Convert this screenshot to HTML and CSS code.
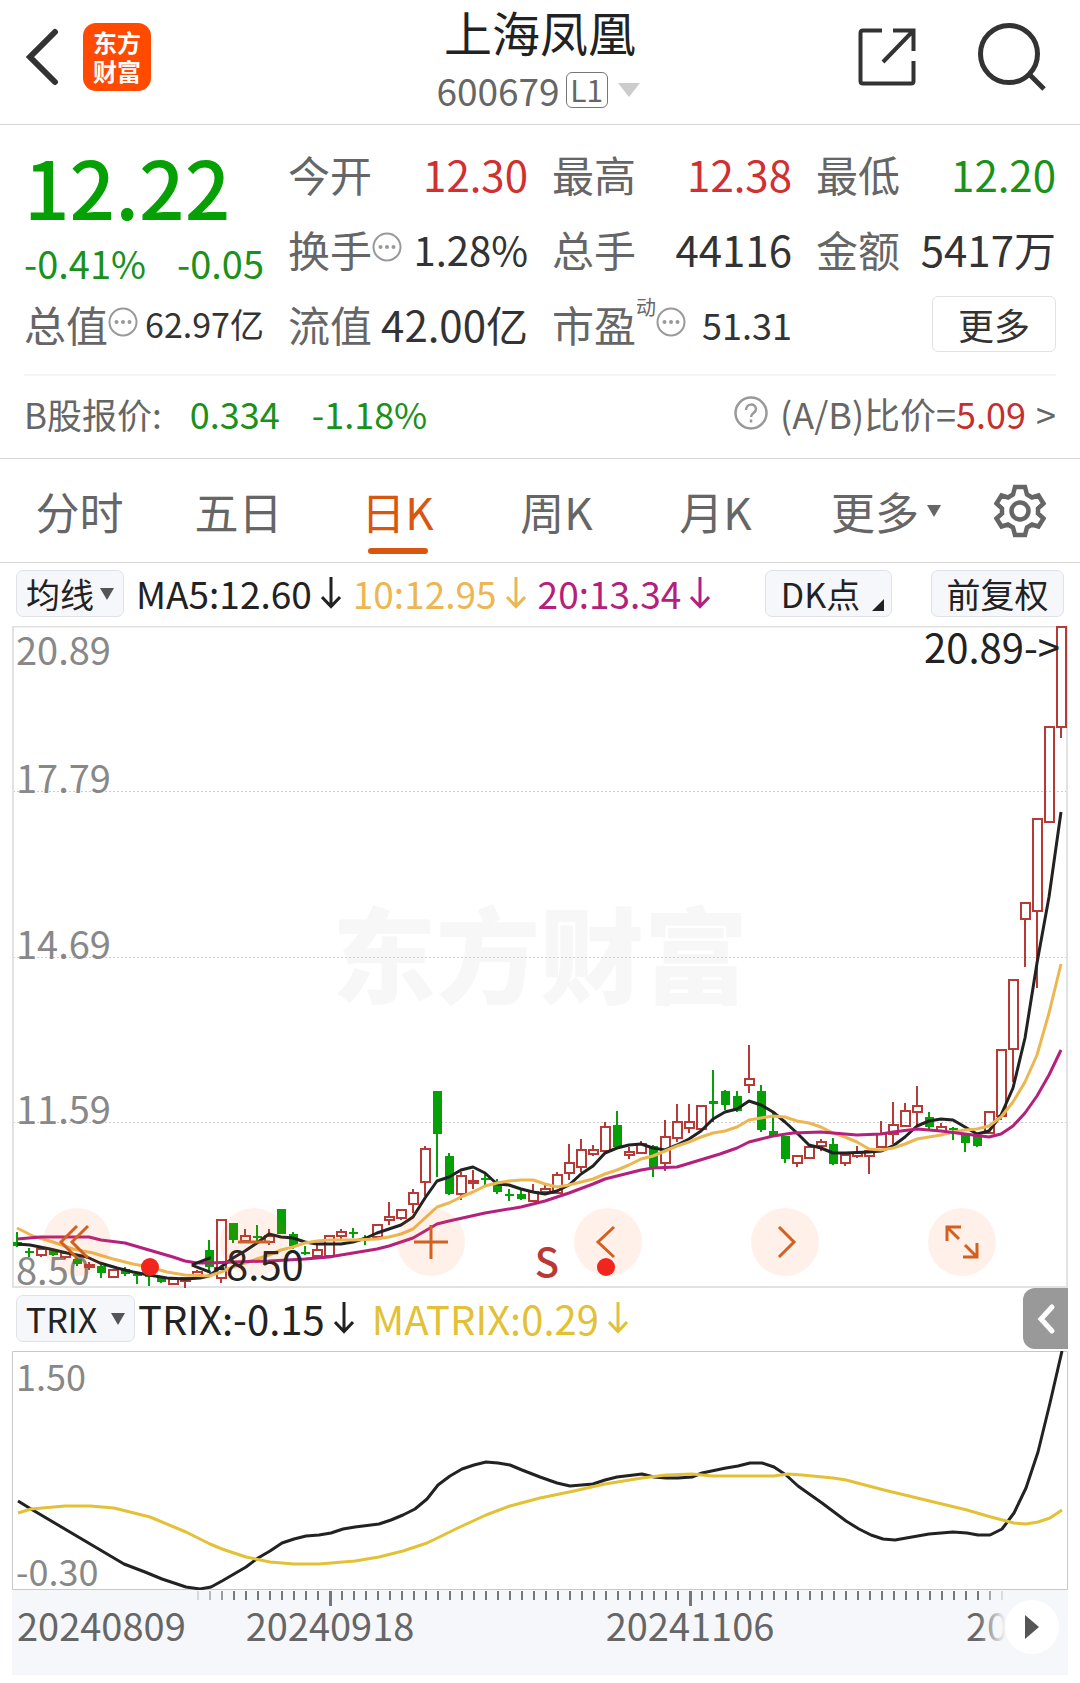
FILE: index.html
```html
<!DOCTYPE html>
<html lang="zh-CN">
<head>
<meta charset="utf-8">
<meta name="viewport" content="width=device-width, initial-scale=1">
<title>上海凤凰 600679</title>
<link rel="stylesheet" href="styles.css">
</head>
<body>
<header class="topbar">
  <div class="topbar-side">
    <button class="icon-btn" type="button" aria-label="返回">
      <svg width="34" height="62" viewBox="0 0 34 62"><path d="M30 6 5 31l25 25" fill="none" stroke="#333" stroke-width="6" stroke-linecap="round" stroke-linejoin="miter"/></svg>
    </button>
    <a class="logo" href="#"><span>东方</span><span>财富</span></a>
  </div>
  <div class="stock">
    <h1 class="stock-name">上海凤凰</h1>
    <div class="stock-code">
      <span>600679</span><span class="level">L1</span>
      <svg width="22" height="14" viewBox="0 0 22 14"><path d="M0 0h22L11 14z" fill="#ccc"/></svg>
    </div>
  </div>
  <div class="topbar-side topbar-right">
    <button class="icon-btn" type="button" aria-label="分享">
      <svg width="60" height="60" viewBox="0 0 60 60" fill="none" stroke="#333" stroke-width="4"><path d="M25 3.500H6Q3.500 3.500 3.500 6V54Q3.500 56.500 6 56.500H54Q56.500 56.500 56.500 54V34M36 3.500H56.500V24M56 4 26 35"/></svg>
    </button>
    <button class="icon-btn" type="button" aria-label="搜索">
      <svg width="70" height="72" viewBox="0 0 70 72" fill="none" stroke="#333"><circle cx="32" cy="33" r="28.500" stroke-width="5"/><path d="M52 53 67 68" stroke-width="5"/></svg>
    </button>
  </div>
</header>

<main>
<section class="quote">
  <div class="price-box">
    <div class="price">12.22</div>
    <div class="change"><span>-0.41%</span><span>-0.05</span></div>
  </div>
  <dl class="field"><dt>今开</dt><dd class="up">12.30</dd></dl>
  <dl class="field"><dt>最高</dt><dd class="up">12.38</dd></dl>
  <dl class="field"><dt>最低</dt><dd class="down">12.20</dd></dl>
  <dl class="field"><dt>换手<svg class="dots" viewBox="0 0 30 30"><use href="#dots"/></svg></dt><dd class="rate">1.28%</dd></dl>
  <dl class="field"><dt>总手</dt><dd>44116</dd></dl>
  <dl class="field"><dt>金额</dt><dd>5417万</dd></dl>
  <dl class="field"><dt>总值<svg class="dots" viewBox="0 0 30 30"><use href="#dots"/></svg></dt><dd class="small">62.97亿</dd></dl>
  <dl class="field"><dt>流值</dt><dd>42.00亿</dd></dl>
  <dl class="field"><dt>市盈<sup>动</sup><svg class="dots" viewBox="0 0 30 30"><use href="#dots"/></svg></dt><dd class="mid">51.31</dd></dl>
  <div class="field field-end"><button class="more-btn" type="button">更多</button></div>
</section>

<a class="bshare" href="#">
  <span class="b-label">B股报价:</span>
  <span class="down b-price">0.334</span>
  <span class="down">-1.18%</span>
  <svg class="help" width="34" height="34" viewBox="0 0 34 34" fill="none" stroke="#999"><circle cx="17" cy="17" r="15.500" stroke-width="2.500"/><path d="M12 14c0-7 10-7 10-1 0 4-5 4-5 8M17 23.500v3" stroke-width="2.500"/></svg>
  <span>(A/B)比价=</span><span class="up">5.09</span><span class="gt">&gt;</span>
</a>

<nav class="tabs">
  <button type="button">分时</button>
  <button type="button">五日</button>
  <button type="button" class="active">日K</button>
  <button type="button">周K</button>
  <button type="button">月K</button>
  <button type="button">更多<svg class="tab-tri" width="14" height="12" viewBox="0 0 14 12"><path d="M0 0h14L7 12z" fill="#666"/></svg></button>
  <button type="button" aria-label="设置">
    <svg width="52" height="54" viewBox="-26 -27 52 54" fill="none" stroke="#666" stroke-width="4.500"><path d="M-5-24H5L7-16.500 12-13.500 18.500-15.500 23.500-7.500 18-2.500V2.500L23.500 7.500 18.500 15.500 12 13.500 7 16.500 5 24H-5L-7 16.500-12 13.500-18.500 15.500-23.500 7.500-18 2.500V-2.500L-23.500-7.500-18.500-15.500-12-13.500-7-16.500Z"/><circle r="8.500"/></svg>
  </button>
</nav>

<div class="legend">
  <button class="chip" type="button">均线<svg width="14" height="12" viewBox="0 0 14 12"><path d="M0 0h14L7 12z" fill="#555"/></svg></button>
  <span class="ma ma5">MA5:12.60<svg class="arrow" viewBox="0 0 20 32"><use href="#down"/></svg></span>
  <span class="ma ma10">10:12.95<svg class="arrow" viewBox="0 0 20 32"><use href="#down"/></svg></span>
  <span class="ma ma20">20:13.34<svg class="arrow" viewBox="0 0 20 32"><use href="#down"/></svg></span>
  <button class="chip chip-dk" type="button">DK点<svg width="12" height="12" viewBox="0 0 12 12"><path d="M12 0v12H0z" fill="#222"/></svg></button>
  <button class="chip chip-adj" type="button">前复权</button>
</div>

<div class="chart">
  <svg id="kline" class="plot" viewBox="12 626 1056 662">
    <text class="watermark" x="540" y="996" text-anchor="middle">东方财富</text>
    <path class="grid" d="M13 791.500H1067M13 957.500H1067M13 1122.500H1067"/>
    <path d="M13 626V1287H1067V626.500H12" fill="none" stroke="#e2e2e2" stroke-width="2"/>
    <g class="axis-label">
      <text x="16" y="665">20.89</text><text x="16" y="793">17.79</text><text x="16" y="959">14.69</text><text x="16" y="1124">11.59</text><text x="16" y="1285">8.50</text>
    </g>
    <g id="candles"></g>
    <g class="line">
      <path id="ma5" stroke="#222"/>
      <path id="ma10" stroke="#ecb752"/>
      <path id="ma20" stroke="#b5207c"/>
    </g>
    <text class="mark" x="1060" y="663" text-anchor="end">20.89-&gt;</text>
    <text class="mark" x="190" y="1280">&lt;-8.50</text>
    <circle cx="150" cy="1267" r="9" fill="#f1241e"/>
    <text class="sell" x="547" y="1277" text-anchor="middle">S</text>
  </svg>
  <div class="controls">
    <button type="button" aria-label="最左"><svg viewBox="-34 -34 68 68"><path d="M0-16-16 0 0 16M11-16-5 0 11 16"/></svg></button>
    <button type="button" aria-label="缩小"><svg viewBox="-34 -34 68 68"><path d="M-16 0H16"/></svg></button>
    <button type="button" aria-label="放大"><svg viewBox="-34 -34 68 68"><path d="M-17 0H17M0-17V17"/></svg></button>
    <button type="button" aria-label="左移"><svg viewBox="-34 -34 68 68"><path d="M6-15-10 0 6 15"/><circle class="dot" cx="-2" cy="25" r="9"/></svg></button>
    <button type="button" aria-label="右移"><svg viewBox="-34 -34 68 68"><path d="M-6-15 9 0-6 15"/></svg></button>
    <button type="button" aria-label="全屏"><svg viewBox="-34 -34 68 68"><path d="M-1-15H-15V-1M-15-15-3-3M3 3 15 15M15 1V15H1"/></svg></button>
  </div>
</div>

<div class="legend legend-sub">
  <button class="chip chip-trix" type="button">TRIX<svg width="14" height="12" viewBox="0 0 14 12"><path d="M0 0h14L7 12z" fill="#555"/></svg></button>
  <span class="ma trix">TRIX:-0.15<svg class="arrow" viewBox="0 0 20 32"><use href="#down"/></svg></span>
  <span class="ma matrix">MATRIX:0.29<svg class="arrow" viewBox="0 0 20 32"><use href="#down"/></svg></span>
  <button class="drawer" type="button" aria-label="展开"><svg width="20" height="34" viewBox="0 0 20 34"><path d="M16 5 5 17 16 29" fill="none" stroke="#fff" stroke-width="5" stroke-linecap="round"/></svg></button>
</div>

<div class="chart">
  <svg class="plot" viewBox="12 1351 1056 239">
    <path d="M12.500 1351.500H1067.500V1589.500H12.500Z" fill="none" stroke="#c8c8c8"/>
    <g class="axis-label sub"><text x="16" y="1391">1.50</text><text x="16" y="1586">-0.30</text></g>
    <g class="line"><path id="trix" stroke="#222"/><path id="matrix" stroke="#e3c136"/></g>
  </svg>
</div>

<div class="chart timeline">
  <svg class="plot" viewBox="12 1590 1056 85">
    <defs>
      <linearGradient id="tickFade" gradientUnits="userSpaceOnUse" x1="186" y1="0" x2="1008" y2="0"><stop offset="0" stop-color="#777" stop-opacity="0"/><stop offset=".06" stop-color="#777"/><stop offset=".965" stop-color="#777"/><stop offset="1" stop-color="#777" stop-opacity="0"/></linearGradient>
      <linearGradient id="dateFade" gradientUnits="userSpaceOnUse" x1="978" y1="0" x2="1006" y2="0"><stop offset="0" stop-color="#666"/><stop offset="1" stop-color="#666" stop-opacity="0"/></linearGradient>
    </defs>
    <path id="ticks" fill="url(#tickFade)"/>
    <g class="date"><text x="17" y="1641">20240809</text><text x="330" y="1641" text-anchor="middle">20240918</text><text x="690" y="1641" text-anchor="middle">20241106</text><text x="966" y="1641" fill="url(#dateFade)">20</text></g>
  </svg>
  <button class="play" type="button" aria-label="播放"><svg width="14" height="24" viewBox="0 0 14 24"><path d="M0 0 14 12 0 24z" fill="#555"/></svg></button>
</div>
</main>

<svg width="0" height="0" class="symbols" aria-hidden="true">
  <symbol id="dots" viewBox="0 0 30 30"><circle cx="15" cy="15" r="13.500" fill="none" stroke="#999" stroke-width="2"/><g fill="#999"><circle cx="8.500" cy="15" r="2"/><circle cx="15" cy="15" r="2"/><circle cx="21.500" cy="15" r="2"/></g></symbol>
  <symbol id="down" viewBox="0 0 20 32"><path d="M10 0V29M1 20 10 29.500 19 20" fill="none" stroke="currentColor" stroke-width="3"/></symbol>
</svg>
<script src="chart.js"></script>
</body>
</html>
```
FILE: styles.css
```css
* { box-sizing: border-box; }
body {
  margin: 0;
  background: #fff;
  color: #333;
  font-family: "Noto Sans CJK SC", "Noto Sans", sans-serif;
}
button { font: inherit; color: inherit; background: none; border: 0; padding: 0; }
a { color: inherit; text-decoration: none; }
svg { display: block; flex: none; }
.symbols { position: absolute; }
.up { color: #d03030; }
.down { color: #1a911a; }

.topbar {
  display: grid;
  grid-template-columns: 1fr auto 1fr;
  height: 125px;
  border-bottom: 1px solid #d6d6d6;
}
.topbar-side { display: flex; align-items: center; padding: 0 0 10px 25px; gap: 24px; }
.topbar-right { justify-content: flex-end; padding: 0 33px 10px 0; gap: 60px; }
.logo {
  display: flex;
  flex-direction: column;
  align-items: center;
  justify-content: center;
  width: 68px;
  height: 68px;
  padding-bottom: 3px;
  border-radius: 13px;
  background: #ff4a00;
  color: #fff;
  font-size: 24px;
  font-weight: 700;
  line-height: 29px;
}
.stock { padding-top: 3px; text-align: center; }
.stock-name { margin: 0; font-size: 48px; font-weight: 400; line-height: 56px; color: #222; }
.stock-code {
  display: flex;
  align-items: center;
  justify-content: center;
  gap: 6px;
  height: 62px;
  padding-right: 4px;
  font-size: 37px;
  line-height: 62px;
  color: #666;
}
.level {
  width: 42px;
  height: 36px;
  border: 1px solid #777;
  border-radius: 6px;
  font-size: 30px;
  line-height: 32px;
}
.stock-code svg { margin-left: 4px; }

.quote {
  display: grid;
  grid-template-columns: repeat(4, 1fr);
  grid-auto-rows: 75px;
  column-gap: 24px;
  margin: 0 24px;
  padding: 11px 0 13px;
  border-bottom: 2px solid #f4f4f4;
}
.price-box { grid-row: span 2; color: #04a004; }
.price { font-size: 80px; font-weight: 500; line-height: 98px; }
.change {
  display: flex;
  justify-content: space-between;
  font-size: 38px;
  line-height: 58px;
  color: #1a911a;
}
.field {
  display: flex;
  align-items: center;
  justify-content: space-between;
  margin: 0;
  white-space: nowrap;
}
.field dt { display: flex; align-items: center; font-size: 42px; color: #666; }
.field dd { margin: 0; font-size: 42px; }
.field dd.small { font-size: 34px; }
.field dd.mid { font-size: 36px; }
.field dd.rate { font-size: 40px; }
.field sup { align-self: flex-start; font-size: 20px; line-height: 28px; }
.dots { width: 30px; height: 30px; margin-bottom: 4px; }
.field-end { justify-content: flex-end; }
.more-btn {
  width: 124px;
  height: 56px;
  border: 1px solid #dfe3e6;
  border-radius: 6px;
  font-size: 36px;
  line-height: 50px;
}

.bshare {
  display: flex;
  align-items: center;
  height: 83px;
  padding: 0 24px 8px;
  border-bottom: 1px solid #d6d6d6;
  font-size: 36px;
  color: #666;
}
.b-price { margin: 0 32px 0 28px; }
.b-label { font-size: 35px; }
.bshare .up { color: #c43030; }
.bshare .down { color: #1a911a; }
.help { margin: 0 12px 0 auto; }
.gt { margin-left: 10px; }

.tabs {
  display: grid;
  grid-template-columns: repeat(5, 159fr) 182fr 85fr;
  height: 104px;
  padding-right: 18px;
  border-bottom: 1px solid #d6d6d6;
  font-size: 44px;
  color: #666;
}
.tabs button { position: relative; display: flex; align-items: center; justify-content: center; }
.tabs .active { color: #d9560f; }
.tabs .active::after {
  content: "";
  position: absolute;
  bottom: 8px;
  width: 60px;
  height: 6px;
  border-radius: 3px;
  background: #d9560f;
}
.tab-tri { margin-left: 8px; }

.legend {
  display: flex;
  align-items: center;
  height: 63px;
  padding: 0 16px 2px;
  font-size: 37px;
}
.chip {
  display: flex;
  align-items: center;
  justify-content: center;
  gap: 6px;
  width: 108px;
  height: 47px;
  border: 1px solid #dfe2e6;
  border-radius: 7px;
  background: #f6f7fa;
  color: #222;
  font-size: 34px;
  line-height: 40px;
}
.chip-dk { width: 127px; margin-left: auto; }
.chip-dk svg { margin: 22px -8px 0 6px; }
.chip-adj { width: 133px; margin-left: 39px; }
.chip-trix { width: 119px; gap: 14px; }
.ma { display: flex; align-items: center; gap: 9px; margin-left: 12px; line-height: 54px; padding-bottom: 2px; }
.arrow { width: 20px; height: 32px; }
.ma5, .trix { color: #222; }
.ma10 { color: #ecb752; }
.ma20 { color: #b5207c; }
.legend-sub { padding-right: 12px; }
.trix, .matrix { font-size: 40px; margin-left: 3px; }
.matrix { margin-left: 18px; color: #e3c136; }
.drawer {
  display: flex;
  align-items: center;
  justify-content: center;
  width: 45px;
  height: 61px;
  margin-left: auto;
  border-radius: 12px 0 0 12px;
  background: #999;
}

.chart { position: relative; margin: 0 12px; }
.plot { width: 100%; height: auto; }
.grid { stroke: #ccc; stroke-dasharray: 2 2; }
.watermark { font-size: 104px; font-weight: 900; fill: #f7f7f7; }
.axis-label { font-size: 38px; fill: #888; }
.axis-label.sub { font-size: 36px; }
.line { fill: none; stroke-width: 3; stroke-linejoin: round; }
.mark { font-size: 40px; fill: #222; }
.sell { font-size: 40px; font-weight: 500; fill: #b83a36; }
.date { font-size: 38px; fill: #666; }
.controls {
  position: absolute;
  right: 72px;
  bottom: 12px;
  left: 31px;
  display: flex;
  justify-content: space-between;
}
.controls button { width: 68px; height: 68px; border-radius: 50%; background: rgba(255, 96, 24, .09); }
.controls path { fill: none; stroke: #d2601f; stroke-width: 3; }
.controls .dot { fill: #f1241e; }
.timeline { background: #f6f7fa; }
.play {
  position: absolute;
  top: 10px;
  right: 9px;
  display: flex;
  align-items: center;
  justify-content: center;
  width: 54px;
  height: 54px;
  border-radius: 50%;
  background: #fff;
}
```
FILE: chart.js
```js
// Each candle: direction, high, body top, body bottom, low (plot units).
const candles = `g1232,1242,1246,1247 g1248,1251,1253,1257 r1248,1249,1255,1257 g1249,1250,1255,1256 r1251,1253,1257,1259
g1258,1259,1264,1266 r1262,1265,1267,1270 g1264,1266,1273,1278 r1269,1270,1277,1278 g1267,1269,1274,1276
g1272,1274,1276,1284 g1272,1275,1277,1286 g1276,1277,1282,1283 r1278,1279,1284,1285 r1277,1278,1281,1288
r1270,1272,1275,1277 g1240,1250,1267,1272 r1220,1220,1278,1283 g1223,1223,1240,1243 r1229,1236,1241,1243
g1225,1236,1238,1242 r1229,1236,1242,1245 g1209,1209,1234,1234 g1232,1234,1246,1249 g1246,1252,1254,1255
r1245,1250,1256,1258 r1236,1236,1256,1256 r1229,1232,1236,1239 g1228,1232,1234,1238 g1235,1238,1240,1245
r1225,1225,1237,1237 r1202,1217,1220,1225 r1209,1210,1218,1220 r1189,1193,1204,1213 r1146,1149,1182,1196
g1091,1091,1134,1177 g1153,1156,1194,1195 r1172,1176,1194,1200 r1170,1181,1183,1189 g1173,1178,1180,1185
g1179,1182,1192,1194 g1189,1194,1196,1201 g1188,1194,1199,1200 r1184,1192,1201,1202 r1184,1189,1192,1194
r1172,1175,1193,1193 r1144,1163,1173,1180 r1139,1150,1167,1172 r1145,1150,1154,1156 r1122,1127,1151,1151
g1111,1125,1147,1148 r1147,1152,1155,1159 r1141,1144,1153,1154 g1145,1146,1168,1177 r1120,1137,1163,1171
r1104,1122,1138,1142 r1104,1122,1128,1133 r1105,1106,1129,1129 g1070,1101,1104,1122 g1090,1091,1105,1110
g1091,1096,1111,1112 r1045,1079,1085,1093 g1085,1091,1130,1132 g1112,1131,1136,1136 g1136,1136,1159,1163
r1155,1156,1163,1167 r1146,1147,1158,1158 r1139,1142,1146,1151 g1138,1144,1164,1165 r1154,1155,1163,1166
r1146,1153,1156,1158 r1148,1151,1156,1174 r1121,1134,1147,1147 r1102,1125,1134,1144 r1103,1111,1126,1127
r1086,1106,1112,1127 g1112,1117,1127,1130 r1123,1127,1131,1132 g1127,1128,1130,1140 g1133,1135,1143,1152
g1133,1135,1146,1147 r1112,1112,1133,1134 r1049,1050,1116,1120 r980,980,1049,1082 r903,903,919,967
r819,819,911,988 r727,727,822,822 r627,627,727,738`.split(/\s+/);

const RED = "#b83a36";
const GREEN = "#05a005";
document.getElementById("candles").innerHTML = candles.map((c, i) => {
  const x = 17 + 12 * i;
  const [high, top, bottom, low] = c.slice(1).split(",").map(Number);
  if (c[0] === "g") {
    return `<path fill="${GREEN}" d="M${x - 1} ${high}h2V${low}h-2zM${x - 4} ${top}h9V${bottom}h-9z"/>`;
  }
  const wick = `M${x} ${high}V${top}M${x} ${bottom}V${low}`;
  return `<path fill="none" stroke="${RED}" stroke-width="2" d="${wick}M${x - 4} ${top}h9V${bottom}h-9z"/>`;
}).join("");

const draw = (id, points) => {
  document.getElementById(id).setAttribute("d", "M" + points.trim().replace(/\s+/g, "L"));
};

draw("ma5", `17,1244 30,1245 50,1249 67,1253 87,1257 100,1263 117,1268 133,1272 149,1275 167,1278 185,1279 200,1278 209,1276 221,1267 233,1258 245,1251 257,1243 269,1234 281,1237 293,1238 305,1242 317,1244 329,1244 341,1244 353,1242 366,1238 377,1233 389,1229 401,1225 413,1217 425,1198 437,1181 449,1177 461,1170 473,1167 485,1173 497,1184 509,1185 521,1189 533,1192 545,1194 557,1191 569,1185 581,1174 593,1166 605,1153 617,1148 629,1145 641,1144 653,1148 665,1150 677,1145 689,1139 701,1131 713,1119 725,1112 737,1109 749,1101 761,1105 773,1112 785,1122 797,1133 809,1145 821,1148 833,1153 845,1153 869,1152 881,1151 893,1146 905,1137 917,1126 929,1121 941,1119 953,1120 965,1127 977,1134 989,1131 1001,1115 1013,1088 1025,1038 1037,963 1049,897 1061,812`);
draw("ma10", `17,1228 33,1236 53,1242 73,1249 93,1253 113,1259 133,1264 149,1267 167,1272 185,1275 209,1276 221,1272 233,1267 245,1263 257,1259 269,1255 281,1250 293,1247 305,1243 317,1241 329,1240 353,1240 377,1239 389,1237 401,1234 413,1229 425,1218 437,1207 449,1203 461,1197 473,1192 485,1186 497,1183 509,1181 521,1180 533,1180 545,1184 557,1187 569,1185 581,1182 593,1179 605,1174 617,1170 629,1165 641,1159 653,1156 665,1151 677,1146 689,1142 701,1137 713,1133 725,1131 737,1127 749,1120 761,1118 773,1116 785,1117 797,1121 809,1123 821,1127 833,1133 845,1137 857,1142 869,1149 881,1150 893,1148 905,1144 917,1139 929,1137 941,1135 953,1132 965,1130 977,1129 989,1126 1001,1117 1013,1102 1025,1082 1037,1055 1049,1013 1061,964`);
draw("ma20", `17,1239 41,1237 89,1237 101,1240 125,1243 149,1250 173,1257 185,1261 197,1263 209,1263 233,1262 269,1261 305,1259 329,1257 353,1253 377,1249 389,1246 413,1238 437,1224 449,1221 485,1213 521,1207 545,1201 569,1193 593,1184 605,1179 617,1176 641,1170 653,1168 677,1167 720,1154 737,1148 749,1142 761,1139 773,1136 793,1133 821,1132 857,1135 881,1134 893,1132 917,1129 941,1131 965,1134 989,1137 1001,1134 1013,1126 1025,1113 1037,1096 1049,1075 1061,1050`);
draw("trix", `18,1501 31,1509 124,1564 145,1572 162,1579 186,1587 200,1589 211,1587 222,1581 234,1574 246,1567 258,1558 270,1551 282,1543 294,1539 306,1536 319,1535 331,1533 343,1529 355,1527 379,1524 391,1520 403,1515 415,1509 427,1499 438,1485 450,1476 462,1469 474,1465 486,1462 498,1463 510,1465 522,1470 540,1477 557,1483 570,1486 593,1484 605,1480 617,1477 642,1474 654,1477 666,1478 678,1478 692,1477 702,1473 726,1468 738,1466 750,1463 762,1463 774,1467 786,1475 798,1486 822,1503 846,1521 859,1529 871,1535 883,1539 895,1540 912,1537 929,1534 953,1532 967,1533 978,1535 990,1535 1002,1529 1014,1513 1026,1488 1038,1452 1050,1403 1062,1351`);
draw("matrix", `18,1513 31,1509 65,1506 90,1506 114,1508 150,1517 186,1532 210,1544 222,1549 246,1557 270,1562 294,1564 319,1564 355,1561 379,1557 403,1551 427,1543 462,1526 486,1515 510,1506 540,1498 574,1491 605,1484 642,1478 666,1475 692,1474 712,1476 774,1476 788,1474 802,1475 833,1478 846,1480 884,1490 967,1510 991,1517 1014,1523 1026,1524 1038,1522 1050,1518 1062,1510`);

let ticks = "";
for (let i = 0; i <= 67; i++) {
  const x = 198 + 12 * i;
  const tall = x === 330 || x === 690;
  ticks += `M${x - 1} 1591h${tall ? 3 : 2}v${tall ? 15 : 9}h${tall ? -3 : -2}z`;
}
document.getElementById("ticks").setAttribute("d", ticks);
```
